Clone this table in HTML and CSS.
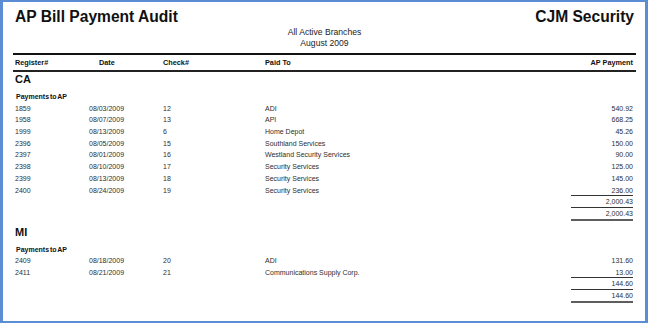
FILE: index.html
```html
<!DOCTYPE html>
<html>
<head>
<meta charset="utf-8">
<link rel="stylesheet" href="styles.css">
</head>
<body>
<div class="frame">
  <div class="page">
    <header class="report-head">
      <div class="title-row">
        <h1 class="title">AP Bill Payment Audit</h1>
        <div class="company">CJM Security</div>
      </div>
      <div class="subtitle">
        <div>All Active Branches</div>
        <div>August 2009</div>
      </div>
    </header>

    <div class="row col-head">
      <span>Register#</span>
      <span class="date-h">Date</span>
      <span>Check#</span>
      <span>Paid To</span>
      <span class="amt">AP Payment</span>
    </div>

    <section class="branch">
      <h2 class="branch-name">CA</h2>
      <div class="group-label">Payments to AP</div>
      <div class="row detail"><span>1859</span><span>08/03/2009</span><span>12</span><span>ADI</span><span class="amt">540.92</span></div>
      <div class="row detail"><span>1958</span><span>08/07/2009</span><span>13</span><span>API</span><span class="amt">668.25</span></div>
      <div class="row detail"><span>1999</span><span>08/13/2009</span><span>6</span><span>Home Depot</span><span class="amt">45.26</span></div>
      <div class="row detail"><span>2396</span><span>08/05/2009</span><span>15</span><span>Southland Services</span><span class="amt">150.00</span></div>
      <div class="row detail"><span>2397</span><span>08/01/2009</span><span>16</span><span>Westland Security Services</span><span class="amt">90.00</span></div>
      <div class="row detail"><span>2398</span><span>08/10/2009</span><span>17</span><span>Security Services</span><span class="amt">125.00</span></div>
      <div class="row detail"><span>2399</span><span>08/13/2009</span><span>18</span><span>Security Services</span><span class="amt">145.00</span></div>
      <div class="row detail"><span>2400</span><span>08/24/2009</span><span>19</span><span>Security Services</span><span class="amt">236.00</span></div>
      <div class="totals">
        <div class="total">2,000.43</div>
        <div class="total">2,000.43</div>
      </div>
    </section>

    <section class="branch">
      <h2 class="branch-name">MI</h2>
      <div class="group-label">Payments to AP</div>
      <div class="row detail"><span>2409</span><span>08/18/2009</span><span>20</span><span>ADI</span><span class="amt">131.60</span></div>
      <div class="row detail"><span>2411</span><span>08/21/2009</span><span>21</span><span>Communications Supply Corp.</span><span class="amt">13.00</span></div>
      <div class="totals">
        <div class="total">144.60</div>
        <div class="total">144.60</div>
      </div>
    </section>
  </div>
</div>
</body>
</html>
```
FILE: styles.css
```css
html, body {
  margin: 0;
  padding: 0;
  background: #ffffff;
}

body {
  font-family: "Liberation Sans", Arial, sans-serif;
  color: #222;
}

.frame {
  box-sizing: border-box;
  width: 648px;
  height: 323px;
  border-style: solid;
  border-color: #5b8dd5;
  border-width: 2px 3px 2px 3px;
  background: #fff;
  overflow: hidden;
}

.page {
  padding: 6px 9px 0 10px;
}

.title-row {
  display: flex;
  justify-content: space-between;
  align-items: baseline;
  height: 18px;
  padding: 0 2px;
}

.title,
.company {
  margin: 0;
  font-size: 15.6px;
  line-height: 18px;
  font-weight: bold;
  color: #111;
}

.subtitle {
  margin-top: 1px;
  text-align: center;
  font-size: 8.6px;
  line-height: 11px;
  color: #222;
}

.row {
  display: grid;
  grid-template-columns: 74px 74px 102px 1fr 90px;
  padding: 0 3px 0 2px;
}

.amt {
  text-align: right;
}

.col-head {
  margin-top: 4px;
  border-top: 2px solid #111;
  border-bottom: 2px solid #222;
  height: 15px;
  line-height: 15px;
  font-size: 7.3px;
  font-weight: bold;
  color: #111;
}

.date-h {
  padding-left: 10px;
}

.branch + .branch {
  margin-top: 4px;
}

.branch-name {
  margin: 0;
  padding-left: 2px;
  font-size: 11px;
  line-height: 14px;
  font-weight: bold;
  color: #111;
}

.group-label {
  margin-top: 5px;
  padding-left: 3px;
  font-size: 7px;
  line-height: 11.7px;
  font-weight: bold;
  color: #111;
  word-spacing: -1px;
}

.detail {
  height: 11.7px;
  line-height: 11.7px;
  font-size: 7px;
  color: #2e2e2e;
}

.totals {
  width: 62px;
  margin: -1.5px 3px 0 auto;
  border-bottom: 2px solid #5e5e5e;
}

.total {
  border-top: 1px solid #333;
  height: 11px;
  line-height: 11px;
  font-size: 7px;
  color: #2e2e2e;
  text-align: right;
}
```
